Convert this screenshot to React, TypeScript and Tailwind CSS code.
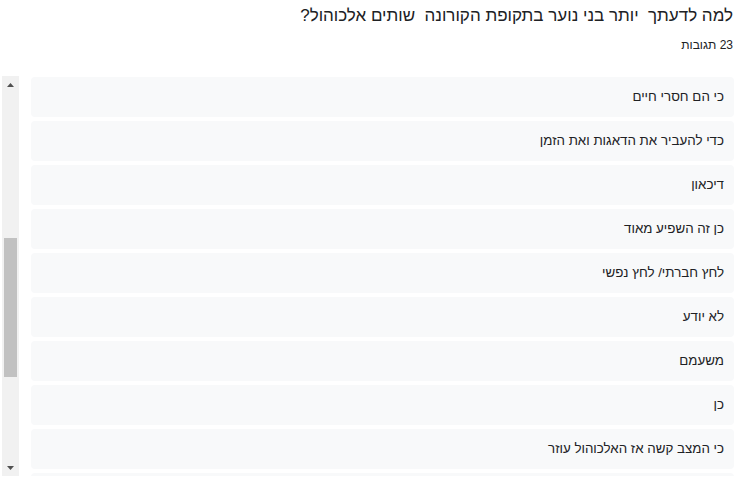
const answers = [
  'כי הם חסרי חיים',
  'כדי להעביר את הדאגות ואת הזמן',
  'דיכאון',
  'כן זה השפיע מאוד',
  'לחץ חברתי/ לחץ נפשי',
  'לא יודע',
  'משעמם',
  'כן',
  'כי המצב קשה אז האלכוהול עוזר',
  '',
]

export default function App() {
  return (
    <div className="w-[748px] h-[488px] bg-white overflow-hidden font-['Liberation_Sans',Arial,sans-serif] text-[#202124]">
      <div dir="rtl" className="pr-[15px] pt-[3px]">
        <div className="text-[17px] leading-[26px] whitespace-pre">למה לדעתך  יותר בני נוער בתקופת הקורונה  שותים אלכוהול?</div>
        <div className="mt-[9px] text-[12px] leading-[14px]">23 תגובות</div>
      </div>

      <div className="flex mt-[24px] h-[400px]">
        {/* scrollbar on the left, rtl page */}
        <div className="ml-[2px] w-[17px] h-[400px] bg-[#f1f1f1] flex flex-col items-center">
          <div className="h-[17px] w-full flex items-center justify-center">
            <svg width="7" height="4" viewBox="0 0 7 4"><path d="M3.5 0 L7 4 L0 4 Z" fill="#505050" /></svg>
          </div>
          <div className="mt-[145px] w-[13px] h-[139px] bg-[#c1c1c1]" />
          <div className="flex-1" />
          <div className="h-[17px] w-full flex items-center justify-center">
            <svg width="7" height="4" viewBox="0 0 7 4"><path d="M0 0 L7 0 L3.5 4 Z" fill="#505050" /></svg>
          </div>
        </div>

        <div className="ml-[12px] w-[703px] overflow-hidden pt-[1px] flex flex-col gap-[4px]">
          {answers.map((a, i) => (
            <div
              key={i}
              dir="rtl"
              className="shrink-0 h-[40px] rounded-[4px] bg-[#f8f9fa] pr-[10px] flex items-center text-[13.33px]"
            >
              {a}
            </div>
          ))}
        </div>
      </div>
    </div>
  )
}
